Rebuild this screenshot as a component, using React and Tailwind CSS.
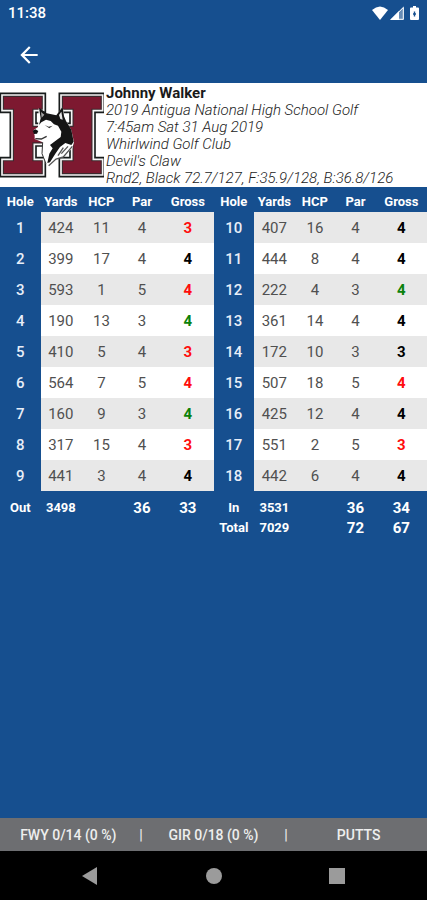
import React from 'react';

const FRONT_NINE = [
    { hole: 1, yards: 424, hcp: 11, par: 4, gross: 3 },
    { hole: 2, yards: 399, hcp: 17, par: 4, gross: 4 },
    { hole: 3, yards: 593, hcp: 1, par: 5, gross: 4 },
    { hole: 4, yards: 190, hcp: 13, par: 3, gross: 4 },
    { hole: 5, yards: 410, hcp: 5, par: 4, gross: 3 },
    { hole: 6, yards: 564, hcp: 7, par: 5, gross: 4 },
    { hole: 7, yards: 160, hcp: 9, par: 3, gross: 4 },
    { hole: 8, yards: 317, hcp: 15, par: 4, gross: 3 },
    { hole: 9, yards: 441, hcp: 3, par: 4, gross: 4 },
];

const BACK_NINE = [
    { hole: 10, yards: 407, hcp: 16, par: 4, gross: 4 },
    { hole: 11, yards: 444, hcp: 8, par: 4, gross: 4 },
    { hole: 12, yards: 222, hcp: 4, par: 3, gross: 4 },
    { hole: 13, yards: 361, hcp: 14, par: 4, gross: 4 },
    { hole: 14, yards: 172, hcp: 10, par: 3, gross: 3 },
    { hole: 15, yards: 507, hcp: 18, par: 5, gross: 4 },
    { hole: 16, yards: 425, hcp: 12, par: 4, gross: 4 },
    { hole: 17, yards: 551, hcp: 2, par: 5, gross: 3 },
    { hole: 18, yards: 442, hcp: 6, par: 4, gross: 4 },
];

const FRONT_TOTALS = [{ label: "Out", yards: 3498, par: 36, gross: 33 }];

const BACK_TOTALS = [
    { label: "In", yards: 3531, par: 36, gross: 34 },
    { label: "Total", yards: 7029, par: 72, gross: 67 },
];

// red for under par, green for over
const grossColor = (gross, par) => {
    if (gross < par) return "text-[#ff0d0d]";
    if (gross > par) return "text-[#0b820b]";
    return "text-black";
};

const H_PATH =
    "M12 52H125V87H97V142H221V87H189V52H302V87H274V245H302V280H189V245H221V188H97V245H125V280H12V245H42V87H12Z";

const TeamLogo = () => (
    <svg viewBox="0 10 312 312" className="size-[104px] shrink-0" role="img" aria-label="Huskies">
        <path d={H_PATH} fill="none" stroke="#181c1c" strokeWidth="27" />
        <path d={H_PATH} fill="none" stroke="#f4f4f4" strokeWidth="17" />
        <path d={H_PATH} fill="none" stroke="#3c2a2e" strokeWidth="7" />
        <path d={H_PATH} fill="#7d1930" />
        {/* husky */}
        <path
            d="M116 86L138 102L168 107L188 83L196 120L214 151L222 188L217 206L190 232L166 238L146 258L136 250L126 222L128 188L104 178L104 168L100 152L114 142L115 122Z"
            fill="#fff"
        />
        {/* head, back and neck markings */}
        <path
            d="M117 84L140 101L169 107L188 81L192 110L198 124L214 150L221 186L214 196L196 190L180 202L166 222L150 248L142 250L148 222L158 206L150 196L166 184L182 172L184 156L174 138L162 134L152 124L138 120L124 128L117 136L122 116Z"
            fill="#151515"
        />
        <path d="M177 106L184 96L188 120L181 118Z" fill="#e4e4e4" />
        <path d="M123 97L133 105L125 114Z" fill="#a5a5a5" />
        <path d="M134 136L146 141L158 138L148 146Z" fill="#333" />
        <path d="M98 153L106 149L115 154L111 162L102 163Z" fill="#111" />
        <path d="M106 177L124 178L140 170" fill="none" stroke="#333" strokeWidth="4" />
        <path d="M128 188L126 222L138 252" fill="none" stroke="#333" strokeWidth="3" />
        <path
            d="M217 200L190 232L168 238L146 258M204 200L184 222M190 204L174 228"
            fill="none"
            stroke="#555"
            strokeWidth="4"
        />
    </svg>
);

const ScoreTable = ({ label, holes, totals }) => (
    <table className="w-1/2 table-fixed self-start text-center" aria-label={label}>
        <thead>
            <tr className="h-6 text-[13px] leading-5 font-bold text-white">
                <th scope="col" className="w-[19%] pt-1">Hole</th>
                <th scope="col" className="w-[19%] pt-1">Yards</th>
                <th scope="col" className="w-[19%] pt-1">HCP</th>
                <th scope="col" className="w-[19%] pt-1">Par</th>
                <th scope="col" className="pt-1">Gross</th>
            </tr>
        </thead>
        <tbody>
            {holes.map(({ hole, yards, hcp, par, gross }) => (
                <tr key={hole} className="group h-[31px] text-[15px] text-[#505050]">
                    <th scope="row" className="pt-0.5 font-medium text-[#e8eef8]">{hole}</th>
                    <td className="bg-white pt-0.5 group-odd:bg-[#e8e8e8]">{yards}</td>
                    <td className="bg-white pt-0.5 group-odd:bg-[#e8e8e8]">{hcp}</td>
                    <td className="bg-white pt-0.5 group-odd:bg-[#e8e8e8]">{par}</td>
                    <td className={`bg-white pt-0.5 font-bold group-odd:bg-[#e8e8e8] ${grossColor(gross, par)}`}>
                        {gross}
                    </td>
                </tr>
            ))}
        </tbody>
        <tfoot>
            {totals.map(({ label, yards, par, gross }) => (
                <tr key={label} className="h-5 align-bottom text-[15px] leading-5 font-bold text-white first:h-[27px]">
                    <th scope="row" className="text-[13px]">{label}</th>
                    <td className="text-[13px]">{yards}</td>
                    <td></td>
                    <td>{par}</td>
                    <td>{gross}</td>
                </tr>
            ))}
        </tfoot>
    </table>
);

const StatusBar = () => (
    <div className="flex h-[26px] items-center justify-between px-2 text-white">
        <span className="text-[15px] font-medium">11:38</span>
        <div className="flex items-center gap-0.5">
            <svg viewBox="0 0 16 14" className="h-[14px] w-4" fill="currentColor">
                <path d="M8 14L0 4Q8 -3 16 4Z" />
            </svg>
            <svg viewBox="0 0 14 14" className="size-[14px]">
                <path d="M14 0V14H0Z" fill="#fff" fillOpacity="0.35" />
                <path d="M9 5V14H0Z" fill="#fff" />
                <path d="M13.3 1.5V13.3H1.5Z" fill="none" stroke="#fff" strokeWidth="1" />
            </svg>
            <svg viewBox="0 0 9 14" className="ml-1 h-[14px] w-[9px]">
                <path d="M3 0H6V1.5H8Q9 1.5 9 2.5V13Q9 14 8 14H1Q0 14 0 13V2.5Q0 1.5 1 1.5H3Z" fill="#fff" />
                <path d="M4.5 5.5V10.5M3 8H6" stroke="#164f8f" strokeWidth="1.4" />
            </svg>
        </div>
    </div>
);

const App = () => {
    return (
        <div className="flex min-h-screen flex-col bg-[#164f8f] font-['Roboto',sans-serif]">
            <StatusBar />

            {/* App bar */}
            <header className="flex h-[57px] items-center px-4">
                <button type="button" aria-label="Back" className="text-white">
                    <svg viewBox="0 0 24 24" className="size-[26px]" fill="currentColor">
                        <path d="M20 11H7.83l5.59-5.59L12 4l-8 8 8 8 1.41-1.41L7.83 13H20v-2z" />
                    </svg>
                </button>
            </header>

            {/* Player and round details */}
            <section className="flex bg-white text-[15px] leading-[17px] text-[#222]">
                <TeamLogo />
                <div className="pt-0.5 pl-0.5 font-light whitespace-nowrap italic">
                    <h1 className="font-bold text-[#1a1a1a] not-italic">Johnny Walker</h1>
                    <p>2019 Antigua National High School Golf</p>
                    <p>7:45am Sat 31 Aug 2019</p>
                    <p>Whirlwind Golf Club</p>
                    <p>Devil's Claw</p>
                    <p>Rnd2, Black 72.7/127, F:35.9/128, B:36.8/126</p>
                </div>
            </section>

            <main className="flex flex-1 pt-px">
                <ScoreTable label="Front nine" holes={FRONT_NINE} totals={FRONT_TOTALS} />
                <ScoreTable label="Back nine" holes={BACK_NINE} totals={BACK_TOTALS} />
            </main>

            {/* Round stats */}
            <div className="flex h-[33px] items-center bg-[#6d6e71] pt-0.5 text-center text-[14px] font-medium text-[#eee]">
                <span className="w-[32%]">FWY 0/14 (0 %)</span>
                <span className="w-[2%]">|</span>
                <span className="w-[32%]">GIR 0/18 (0 %)</span>
                <span className="w-[2%]">|</span>
                <span className="w-[32%]">PUTTS</span>
            </div>

            {/* Android navigation */}
            <nav className="flex h-[49px] items-center justify-between bg-black px-[82px] text-[#9b9b9b]">
                <button type="button" aria-label="Back">
                    <svg viewBox="0 0 16 18" className="h-[18px] w-4" fill="currentColor">
                        <path d="M15 0V18L0 9Z" />
                    </svg>
                </button>
                <button type="button" aria-label="Home" className="size-4 rounded-full bg-current"></button>
                <button type="button" aria-label="Recent apps" className="size-4 bg-current"></button>
            </nav>
        </div>
    );
};

export default App;
